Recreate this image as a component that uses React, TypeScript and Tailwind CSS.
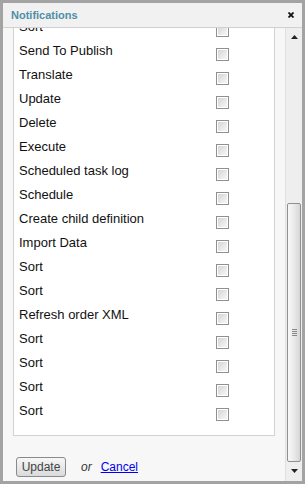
import React from 'react';

const rows = [
  'Sort',
  'Send To Publish',
  'Translate',
  'Update',
  'Delete',
  'Execute',
  'Scheduled task log',
  'Schedule',
  'Create child definition',
  'Import Data',
  'Sort',
  'Sort',
  'Refresh order XML',
  'Sort',
  'Sort',
  'Sort',
  'Sort',
];

const Checkbox = () => (
  <div className="mt-[10px] h-[13px] w-[13px] border border-[#8f8f8f] bg-white p-[1px]">
    <div className="h-full w-full bg-gradient-to-br from-[#d4d4da] to-[#f8f8f8]" />
  </div>
);

const ScrollBar = () => (
  <div className="flex w-[17px] flex-col border-l border-[#e0e0e0] bg-[#eeeeee]">
    <div className="flex h-[17px] items-center justify-center">
      <svg width="7" height="4" viewBox="0 0 7 4">
        <path d="M3.5 0 L7 4 L0 4 Z" fill="#222" />
      </svg>
    </div>
    <div className="flex-1" />
    <div className="mx-[1px] flex h-[259px] items-center justify-center rounded-[2px] border border-[#8f8f8f] bg-gradient-to-r from-[#f7f7f7] via-[#eaeaea] to-[#d6d6d6]">
      <div className="flex w-[5px] flex-col gap-[1px]">
        <div className="h-[1px] bg-[#888]" />
        <div className="h-[1px] bg-[#888]" />
        <div className="h-[1px] bg-[#888]" />
        <div className="h-[1px] bg-[#888]" />
      </div>
    </div>
    <div className="flex h-[17px] items-center justify-center">
      <svg width="7" height="4" viewBox="0 0 7 4">
        <path d="M0 0 L7 0 L3.5 4 Z" fill="#222" />
      </svg>
    </div>
    <div className="h-[2px]" />
  </div>
);

export default function App() {
  return (
    <div
      className="flex h-[484px] w-[305px] flex-col border-[3px] border-[#a3a3a3] bg-[#f7f7f7]"
      style={{ fontFamily: '"Liberation Sans", Arial, sans-serif' }}
    >
      <div className="relative z-10 flex h-[25px] shrink-0 items-center justify-between border-b border-[#d0d0d0] bg-[#f1f1f1] pl-[8px] pr-[8px]">
        <span className="text-[11px] font-bold text-[#4f8ea6]">Notifications</span>
        <svg width="6" height="6" viewBox="0 0 6 6">
          <path d="M0.5 0.5 L5.5 5.5 M5.5 0.5 L0.5 5.5" stroke="#111" strokeWidth="1.8" />
        </svg>
      </div>
      <div className="flex min-h-0 flex-1">
        <div className="min-w-0 flex-1 overflow-hidden">
          <div className="mt-[-15px] pl-[10px] pr-[10px]">
            <div className="border border-[#d2d2d2] bg-white pb-[13px] pl-[5px]">
              {rows.map((label, i) => (
                <div key={i} className="grid h-[24px] grid-cols-[197px_13px]">
                  <span className="pt-[1px] text-[13px] leading-[24px] text-[#111]">{label}</span>
                  <Checkbox />
                </div>
              ))}
            </div>
            <div className="mt-[21px] flex items-center pl-[3px] text-[12px]">
              <button className="h-[20px] w-[50px] rounded-[3px] border border-[#8a8a8a] bg-gradient-to-b from-[#f7f7f7] to-[#dadada] text-[12px] text-[#444]">
                Update
              </button>
              <span className="ml-[15px] italic text-[#333]">or</span>
              <a href="#" className="ml-[9px] text-[#0000ee] underline">
                Cancel
              </a>
            </div>
          </div>
        </div>
        <ScrollBar />
      </div>
    </div>
  );
}
